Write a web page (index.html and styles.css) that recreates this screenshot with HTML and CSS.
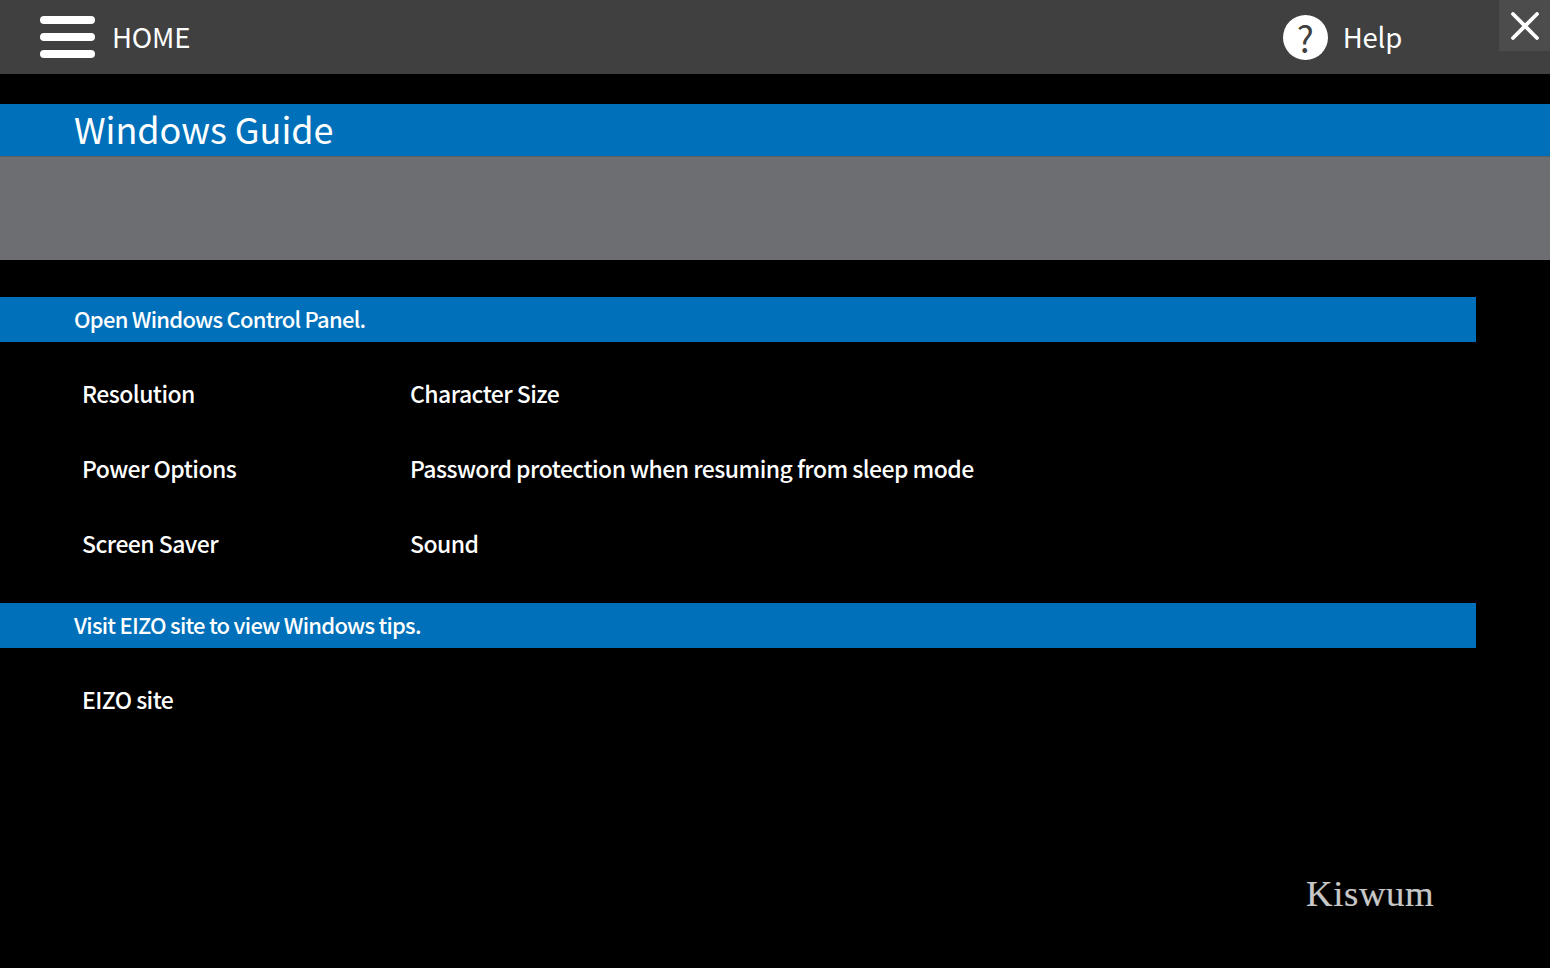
FILE: index.html
```html
<!DOCTYPE html>
<html lang="en">
<head>
<meta charset="utf-8">
<title>Windows Guide</title>
<link rel="stylesheet" href="styles.css">
</head>
<body>
<div class="page">
  <header class="topbar">
    <div class="home">
      <svg class="menu-icon" width="56" height="44" viewBox="0 0 56 44" aria-hidden="true">
        <rect x="0" y="0" width="55" height="8" rx="4" fill="#fff"/>
        <rect x="0" y="17" width="55" height="8" rx="4" fill="#fff"/>
        <rect x="0" y="34" width="55" height="8" rx="4" fill="#fff"/>
      </svg>
      <span class="home-label">HOME</span>
    </div>
    <div class="help">
      <span class="help-icon">?</span>
      <span class="help-label">Help</span>
    </div>
    <button class="close" aria-label="Close">
      <svg width="28" height="28" viewBox="0 0 28 28" aria-hidden="true">
        <path d="M2 2 L26 26 M26 2 L2 26" stroke="#fff" stroke-width="3.8" stroke-linecap="round" fill="none"/>
      </svg>
    </button>
  </header>

  <h1 class="title">Windows Guide</h1>
  <div class="subtitle-band"></div>

  <section class="section">
    <h2 class="section-head">Open Windows Control Panel.</h2>
    <div class="links">
      <a class="link">Resolution</a><a class="link">Character Size</a>
      <a class="link">Power Options</a><a class="link">Password protection when resuming from sleep mode</a>
      <a class="link">Screen Saver</a><a class="link">Sound</a>
    </div>
  </section>

  <section class="section section-second">
    <h2 class="section-head">Visit EIZO site to view Windows tips.</h2>
    <div class="links">
      <a class="link">EIZO site</a>
    </div>
  </section>

  <div class="brand">Kiswum</div>
</div>
</body>
</html>
```

FILE: styles.css
```css
* { box-sizing: border-box; }
html, body { margin: 0; padding: 0; height: 100%; background: #000; overflow: hidden; }
body { font-family: "Noto Sans CJK JP", "Noto Sans", sans-serif; color: #fff; }
.page { width: 1550px; height: 968px; display: flex; flex-direction: column; position: relative; }

.topbar { height: 74px; flex: none; background: #404040; display: flex; align-items: center; padding-left: 40px; position: relative; }
.home { display: flex; align-items: center; gap: 16px; }
.menu-icon { display: block; margin-top: 2px; }
.home-label { font-size: 27.5px; line-height: 38px; padding-bottom: 2px; letter-spacing: -0.2px; font-weight: 400; }
.help { display: flex; align-items: center; gap: 15px; margin-left: auto; margin-right: 148px; }
.help-icon { width: 45px; height: 45px; border-radius: 50%; background: #fff; color: #404040; font-size: 36px; line-height: 45px; text-align: center; font-weight: 400; }
.help-label { font-size: 27.5px; line-height: 38px; padding-bottom: 2px; letter-spacing: -0.2px; font-weight: 400; }
.close { position: absolute; top: 0; right: 0; width: 51px; height: 51px; padding: 0; border: 0; background: #4d4c4c; display: flex; align-items: center; justify-content: center; }

.title { margin: 30px 0 0; height: 52px; flex: none; background: #0070ba; padding-left: 74px; font-size: 36px; font-weight: 400; line-height: 48px; letter-spacing: -0.05px; }
.subtitle-band { height: 104px; flex: none; background: #6d6e71; border-top: 1px solid #5f6063; }

.section { width: 1476px; margin-top: 37px; }
.section-second { margin-top: 22px; }
.section-head { margin: 0; height: 45px; background: #0070ba; padding-left: 74px; font-size: 22px; font-weight: 500; line-height: 43px; letter-spacing: -0.75px; }
.links { display: grid; grid-template-columns: 328px 1fr; grid-auto-rows: 75px; padding: 14px 0 0 82px; }
.link { font-size: 23px; line-height: 75px; height: 75px; letter-spacing: -0.55px; font-weight: 500; }

.brand { position: absolute; left: 1306px; top: 873px; font-family: "Liberation Serif", serif; font-size: 35px; line-height: 44px; color: #c8c8c8; letter-spacing: 0.6px; transform: scaleX(1.05); transform-origin: left center; -webkit-text-stroke: 0.2px #c8c8c8; }
```
